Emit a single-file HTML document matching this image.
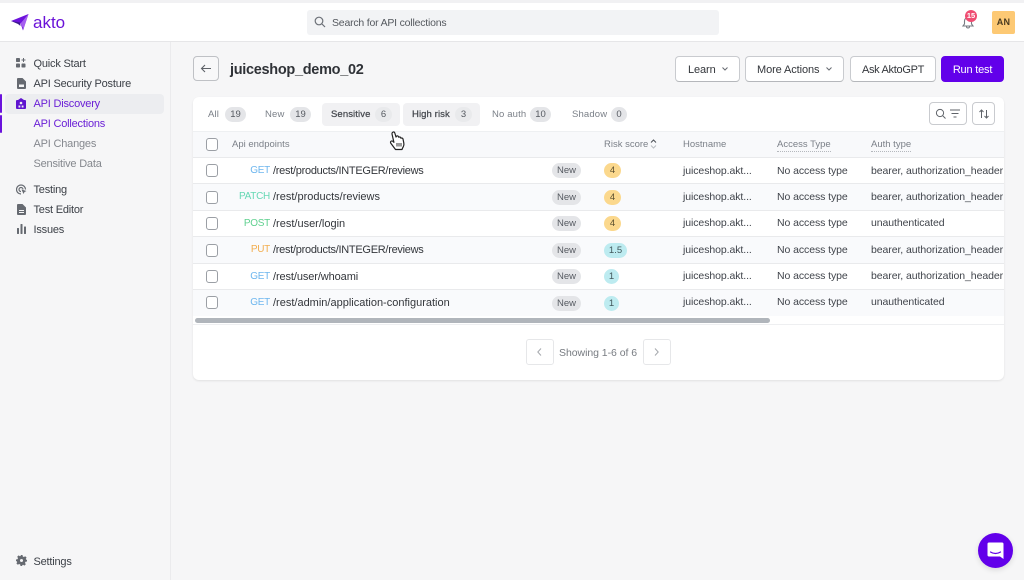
<!DOCTYPE html>
<html lang="en"><head><meta charset="utf-8"><title>Akto</title>
<style>
*{box-sizing:border-box}
html,body{margin:0;padding:0;width:1024px;height:580px;overflow:hidden;background:#f6f6f7}
body{font-family:"Liberation Sans",sans-serif;color:#303338;position:relative;filter:blur(.3px)}
.t{position:absolute;white-space:nowrap;line-height:14px;font-size:11px;letter-spacing:.25px}
.b{position:absolute}
.nav{color:#3c4047;font-size:11px;letter-spacing:-.2px}
.hd{color:#7b8088;font-size:9.5px;letter-spacing:.15px}
.th{color:#7b8088;font-size:9.5px;letter-spacing:0}
.cell{color:#40444b;font-size:10.5px;letter-spacing:-.08px}
.path{color:#33363b;font-size:11px;letter-spacing:0}
.m{font-size:10px;letter-spacing:-.28px;right:754px}
.pill{position:absolute;border-radius:9px;text-align:center;font-size:9.5px;line-height:15px;height:15px;color:#565a61;background:#e4e5e8}
.row{position:absolute;left:193px;width:811px;border-bottom:1px solid #e9eaec}
.cb{position:absolute;left:206px;width:12px;height:13px;border:1px solid #9b9fa5;border-radius:3px;background:#fff}
.btn{position:absolute;top:56px;height:26px;background:#fff;border:1px solid #c9cbcf;border-bottom-color:#b5b7bb;border-radius:4px;font-size:11px;letter-spacing:-.1px;line-height:26px;text-align:center;color:#33363b}
.tab{position:absolute;top:103px;height:23px;border-radius:4px}
.st{font-size:9.5px;color:#45484e;letter-spacing:.1px;-webkit-text-stroke:.25px #45484e}
</style></head><body>

<div class="b" style="left:0;top:0;width:1024px;height:3px;background:#f1f1f3"></div>
<div class="b" style="left:0;top:3px;width:1024px;height:39px;background:#fff;border-bottom:1px solid #e6e6e8"></div>
<div class="b" style="left:170px;top:42px;width:1px;height:538px;background:#ebebed"></div>

<svg class="b" style="left:10px;top:13px" width="20" height="19" viewBox="0 0 20 19"><path d="M1 8 L18.500 1 L13 17.500 L10.500 10.500 Z" fill="#6d12dc"/><path d="M1 8 L10 9.500 L10.500 13 L8 11 Z" fill="#3c1a8e"/><path d="M10.500 10.500 L18.500 1 L13.500 16 Z" fill="#a65ff0"/></svg>
<div class="t" style="left:33px;top:13px;font-size:17px;line-height:20px;color:#6a12d8;letter-spacing:0">akto</div>

<div class="b" style="left:307px;top:10px;width:412px;height:25px;background:#f2f3f5;border-radius:3px"></div>
<svg class="b" style="left:314px;top:16px" width="12" height="12" viewBox="0 0 12 12" fill="none" stroke="#6c7077" stroke-width="1.200"><circle cx="5" cy="5" r="3.800"/><path d="M8 8l3 3"/></svg>
<div class="t" style="left:332px;top:15.500px;font-size:10.500px;color:#55595f;letter-spacing:-.2px">Search for API collections</div>

<svg class="b" style="left:961px;top:15px" width="14" height="14" viewBox="0 0 14 14" fill="none" stroke="#777b82" stroke-width="1.100"><path d="M2 11h10l-1.500-2V6a3.500 3.500 0 0 0-7 0v3z"/><path d="M5.500 11.500a1.500 1.500 0 0 0 3 0"/></svg>
<div class="b" style="left:965px;top:10px;width:12px;height:12px;border-radius:50%;background:#ef4d72;color:#fff;font-size:7.500px;font-weight:bold;line-height:12px;text-align:center">15</div>
<div class="b" style="left:992px;top:11px;width:23px;height:23px;border-radius:2px;background:#fdc974;color:#4a3a20;font-size:9px;font-weight:bold;line-height:23px;text-align:center;letter-spacing:.3px">AN</div>

<!-- Sidebar -->
<div class="b" style="left:5px;top:94px;width:159px;height:20px;background:#ecedf0;border-radius:4px"></div>
<div class="b" style="left:0;top:94px;width:2px;height:19px;background:#6a12dc;border-radius:1px"></div>
<div class="b" style="left:0;top:115px;width:2px;height:18px;background:#6a12dc;border-radius:1px"></div>

<svg class="b" style="left:16px;top:58px" width="10" height="10" viewBox="0 0 10 10" fill="#666a71"><rect x="0" y="0" width="4" height="4" rx=".8"/><rect x="0" y="5.500" width="4" height="4" rx=".8"/><rect x="5.500" y="5.500" width="4" height="4" rx=".8"/><path d="M7 0h1v1.500h1.500v1H8V4H7V2.500H5.500v-1H7z"/></svg>
<svg class="b" style="left:17px;top:78px" width="9" height="11" viewBox="0 0 9 11" fill="#666a71"><path d="M1 0h4.500L9 3.500V10a1 1 0 0 1-1 1H1a1 1 0 0 1-1-1V1a1 1 0 0 1 1-1z"/><rect x="2" y="6.500" width="5" height="2.500" fill="#f6f6f7"/></svg>
<svg class="b" style="left:16px;top:98px" width="10" height="11" viewBox="0 0 10 11" fill="#5f14d0"><path d="M5 0l3 2h1a1 1 0 0 1 1 1v7a1 1 0 0 1-1 1H1a1 1 0 0 1-1-1V3a1 1 0 0 1 1-1h1z"/><circle cx="5" cy="5" r="1.300" fill="#ecedf0"/><rect x="2.500" y="7.500" width="1.800" height="2" fill="#ecedf0"/><rect x="5.700" y="7.500" width="1.800" height="2" fill="#ecedf0"/></svg>
<svg class="b" style="left:16px;top:184px" width="11" height="11" viewBox="0 0 11 11" fill="none" stroke="#666a71" stroke-width="1.200"><path d="M5 10a4.500 4.500 0 1 1 4.500-4.500"/><path d="M5 7.500a2 2 0 1 1 2-2"/><path d="M5.500 5.500l5 1.500-2 1-1 2z" fill="#666a71" stroke="none"/></svg>
<svg class="b" style="left:17px;top:204px" width="9" height="11" viewBox="0 0 9 11" fill="#666a71"><path d="M1 0h4.500L9 3.500V10a1 1 0 0 1-1 1H1a1 1 0 0 1-1-1V1a1 1 0 0 1 1-1z"/><rect x="2" y="6" width="5" height="1" fill="#f6f6f7"/><rect x="2" y="8" width="5" height="1" fill="#f6f6f7"/></svg>
<svg class="b" style="left:17px;top:224px" width="9" height="10" viewBox="0 0 9 10" fill="#666a71"><rect x="0" y="4" width="2" height="6" rx=".5"/><rect x="3.500" y="0" width="2" height="10" rx=".5"/><rect x="7" y="2.500" width="2" height="7.500" rx=".5"/></svg>
<svg class="b" style="left:16px;top:555px" width="11" height="11" viewBox="0 0 11 11"><path d="M4.500 0h2l.3 1.500 1.100.5L9.200 1.200l1.400 1.400-.8 1.300.5 1.100L11 4.500v2l-1.500.3-.5 1.100.8 1.300-1.400 1.400-1.300-.8-1.100.5L6.500 11h-2l-.3-1.500-1.100-.5-1.300.8L.4 8.400l.8-1.300-.5-1.100L0 6.500v-2l1.500-.3.500-1.100-.8-1.300L2.600.4l1.300.8 1.100-.5z" fill="#666a71"/><circle cx="5.500" cy="5.500" r="1.500" fill="#f6f6f7"/></svg>

<div class="t nav" style="left:33.500px;top:57px">Quick Start</div>
<div class="t nav" style="left:33.500px;top:77px">API Security Posture</div>
<div class="t nav" style="left:33.500px;top:97px;color:#6a1fd6">API Discovery</div>
<div class="t nav" style="left:33.500px;top:117px;color:#6a1fd6">API Collections</div>
<div class="t nav" style="left:33.500px;top:137px;color:#85888e">API Changes</div>
<div class="t nav" style="left:33.500px;top:157px;color:#85888e">Sensitive Data</div>
<div class="t nav" style="left:33.500px;top:183px">Testing</div>
<div class="t nav" style="left:33.500px;top:203px">Test Editor</div>
<div class="t nav" style="left:33.500px;top:223px">Issues</div>
<div class="t nav" style="left:33.500px;top:555px">Settings</div>

<!-- Header -->
<div class="b" style="left:193px;top:56px;width:26px;height:25px;background:#f8f8f9;border:1px solid #bfc1c5;border-radius:4px"></div>
<svg class="b" style="left:200px;top:63px" width="12" height="11" viewBox="0 0 12 11" fill="none" stroke="#5f6369" stroke-width="1.100"><path d="M11 5.500H1.500M5 2L1.500 5.500 5 9"/></svg>
<div class="t" style="left:230px;top:60px;font-size:14.500px;line-height:20px;font-weight:bold;color:#2f3237;letter-spacing:-.3px">juiceshop_demo_02</div>

<div class="btn" style="left:675px;width:65px;text-align:left;padding-left:12px">Learn</div>
<svg class="b" style="left:721px;top:66px" width="8" height="6" viewBox="0 0 8 6" fill="none" stroke="#666a71" stroke-width="1"><path d="M1.500 1.500L4 4l2.500-2.500"/></svg>
<div class="btn" style="left:745px;width:99px;text-align:left;padding-left:11px">More Actions</div>
<svg class="b" style="left:825px;top:66px" width="8" height="6" viewBox="0 0 8 6" fill="none" stroke="#666a71" stroke-width="1"><path d="M1.500 1.500L4 4l2.500-2.500"/></svg>
<div class="btn" style="left:850px;width:86px;letter-spacing:-.3px">Ask AktoGPT</div>
<div class="btn" style="left:941px;width:63px;background:#6200ea;border-color:#6200ea;color:#fff;letter-spacing:-.2px">Run test</div>

<!-- Card -->
<div class="b" style="left:193px;top:97px;width:811px;height:283px;background:#fff;border-radius:6px;box-shadow:0 1px 2px rgba(0,0,0,.09)"></div>

<div class="tab" style="left:322px;width:78px;background:#f1f1f3"></div>
<div class="tab" style="left:403px;width:77px;background:#f1f1f3"></div>

<div class="t hd" style="left:208px;top:108px">All</div>
<div class="pill" style="left:225px;top:107px;width:21px">19</div>
<div class="t hd" style="left:265px;top:108px">New</div>
<div class="pill" style="left:290px;top:107px;width:21px">19</div>
<div class="t st" style="left:331px;top:108px">Sensitive</div>
<div class="pill" style="left:375px;top:107px;width:17px;background:#e9eaec">6</div>
<div class="t st" style="left:412px;top:108px">High risk</div>
<div class="pill" style="left:455px;top:107px;width:17px;background:#e9eaec">3</div>
<div class="t hd" style="left:492px;top:108px">No auth</div>
<div class="pill" style="left:530px;top:107px;width:21px">10</div>
<div class="t hd" style="left:572px;top:108px">Shadow</div>
<div class="pill" style="left:611px;top:107px;width:16px">0</div>

<div class="b" style="left:929px;top:102px;width:38px;height:23px;border:1px solid #c9cbcf;border-radius:4px;background:#fff"></div>
<svg class="b" style="left:935px;top:108px" width="28" height="12" viewBox="0 0 28 12" fill="none" stroke="#5f6369" stroke-width="1"><circle cx="5" cy="5" r="3.600"/><path d="M7.800 7.800L10.500 10.500"/><path d="M15 2h10M16.500 5.500h7M18.500 9h3"/></svg>
<div class="b" style="left:972px;top:102px;width:23px;height:23px;border:1px solid #c9cbcf;border-radius:4px;background:#fff"></div>
<svg class="b" style="left:978px;top:108px" width="12" height="12" viewBox="0 0 12 12" fill="none" stroke="#5f6369" stroke-width="1"><path d="M3.500 10V2M1.500 4l2-2 2 2M8.500 2v8M6.500 8l2 2 2-2"/></svg>

<!-- Table header -->
<div class="b" style="left:193px;top:131px;width:811px;height:27px;background:#f8f9fb;border-top:1px solid #eef0f2;border-bottom:1px solid #e9eaec"></div>
<div class="cb" style="top:138px"></div>
<div class="t th" style="left:232px;top:138px">Api endpoints</div>
<div class="t th" style="left:604px;top:138px">Risk score</div>
<svg class="b" style="left:650px;top:139px" width="7" height="10" viewBox="0 0 7 10" fill="none" stroke-width="1"><path d="M1 3.500L3.500 1 6 3.500" stroke="#4c5056"/><path d="M1 6.500L3.500 9 6 6.500" stroke="#b9bcc1"/></svg>
<div class="t th" style="left:683px;top:138px">Hostname</div>
<div class="t th" style="left:777px;top:138px;border-bottom:1px dotted #b5b8bd;line-height:13px">Access Type</div>
<div class="t th" style="left:871px;top:138px;border-bottom:1px dotted #b5b8bd;line-height:13px">Auth type</div>

<!-- Rows -->
<div class="row" style="top:158px;height:26px;background:#fff"></div>
<div class="row" style="top:184px;height:27px;background:#f9fafc"></div>
<div class="row" style="top:211px;height:26px;background:#fff"></div>
<div class="row" style="top:237px;height:27px;background:#f9fafc"></div>
<div class="row" style="top:264px;height:26px;background:#fff"></div>
<div class="row" style="top:290px;height:26px;background:#f9fafc;border-bottom:0"></div>

<div class="cb" style="top:164px"></div><div class="cb" style="top:191px"></div><div class="cb" style="top:217px"></div><div class="cb" style="top:244px"></div><div class="cb" style="top:270px"></div><div class="cb" style="top:296px"></div>

<div class="t m" style="top:164px;color:#6db6ee">GET</div>
<div class="t path" style="left:273px;top:164px;letter-spacing:-.28px">/rest/products/INTEGER/reviews</div>
<div class="t m" style="top:190px;color:#66d8b4">PATCH</div>
<div class="t path" style="left:273px;top:190px">/rest/products/reviews</div>
<div class="t m" style="top:217px;color:#5fd08f">POST</div>
<div class="t path" style="left:273px;top:217px">/rest/user/login</div>
<div class="t m" style="top:243px;color:#f2ae4f">PUT</div>
<div class="t path" style="left:273px;top:243px;letter-spacing:-.28px">/rest/products/INTEGER/reviews</div>
<div class="t m" style="top:270px;color:#6db6ee">GET</div>
<div class="t path" style="left:273px;top:270px;letter-spacing:-.1px">/rest/user/whoami</div>
<div class="t m" style="top:296px;color:#6db6ee">GET</div>
<div class="t path" style="left:273px;top:296px">/rest/admin/application-configuration</div>

<div class="pill" style="left:552px;top:163px;width:29px">New</div>
<div class="pill" style="left:552px;top:190px;width:29px">New</div>
<div class="pill" style="left:552px;top:216px;width:29px">New</div>
<div class="pill" style="left:552px;top:243px;width:29px">New</div>
<div class="pill" style="left:552px;top:269px;width:29px">New</div>
<div class="pill" style="left:552px;top:296px;width:29px">New</div>

<div class="pill" style="left:604px;top:163px;width:17px;background:#fbd88d;color:#5c5030">4</div>
<div class="pill" style="left:604px;top:190px;width:17px;background:#fbd88d;color:#5c5030">4</div>
<div class="pill" style="left:604px;top:216px;width:17px;background:#fbd88d;color:#5c5030">4</div>
<div class="pill" style="left:604px;top:243px;width:23px;background:#bdebf0;color:#42585c">1.5</div>
<div class="pill" style="left:604px;top:269px;width:15px;background:#bdebf0;color:#42585c">1</div>
<div class="pill" style="left:604px;top:296px;width:15px;background:#bdebf0;color:#42585c">1</div>

<div class="t cell" style="left:683px;top:164px">juiceshop.akt...</div>
<div class="t cell" style="left:683px;top:190px">juiceshop.akt...</div>
<div class="t cell" style="left:683px;top:216px">juiceshop.akt...</div>
<div class="t cell" style="left:683px;top:243px">juiceshop.akt...</div>
<div class="t cell" style="left:683px;top:269px">juiceshop.akt...</div>
<div class="t cell" style="left:683px;top:295px">juiceshop.akt...</div>

<div class="t cell" style="left:777px;top:164px">No access type</div>
<div class="t cell" style="left:777px;top:190px">No access type</div>
<div class="t cell" style="left:777px;top:216px">No access type</div>
<div class="t cell" style="left:777px;top:243px">No access type</div>
<div class="t cell" style="left:777px;top:269px">No access type</div>
<div class="t cell" style="left:777px;top:295px">No access type</div>

<div class="b" style="left:871px;top:150px;width:133px;height:166px;overflow:hidden">
<div class="t cell" style="left:0;top:14px">bearer, authorization_header</div>
<div class="t cell" style="left:0;top:40px">bearer, authorization_header</div>
<div class="t cell" style="left:0;top:66px">unauthenticated</div>
<div class="t cell" style="left:0;top:93px">bearer, authorization_header</div>
<div class="t cell" style="left:0;top:119px">bearer, authorization_header</div>
<div class="t cell" style="left:0;top:145px">unauthenticated</div>
</div>

<!-- Scrollbar -->
<div class="b" style="left:195px;top:318px;width:575px;height:5px;background:#b0b5bb;border-radius:3px"></div>
<div class="b" style="left:193px;top:324px;width:811px;height:1px;background:#eeeff1"></div>

<!-- Pagination -->
<div class="b" style="left:526px;top:339px;width:28px;height:26px;border:1px solid #e6e7e9;border-radius:3px;background:#fff"></div>
<svg class="b" style="left:536px;top:347px" width="7" height="10" viewBox="0 0 7 10" fill="none" stroke="#a5a8ad" stroke-width="1"><path d="M5 1.500L1.800 5 5 8.500"/></svg>
<div class="t" style="left:559px;top:346px;font-size:10.500px;color:#777b81;letter-spacing:-.05px">Showing 1-6 of 6</div>
<div class="b" style="left:643px;top:339px;width:28px;height:26px;border:1px solid #e6e7e9;border-radius:3px;background:#fff"></div>
<svg class="b" style="left:653px;top:347px" width="7" height="10" viewBox="0 0 7 10" fill="none" stroke="#a5a8ad" stroke-width="1"><path d="M2 1.500L5.200 5 2 8.500"/></svg>

<!-- Cursor -->
<svg class="b" style="left:388px;top:130px" width="19" height="22" viewBox="0 0 19 22"><path d="M4.500 2.500c1-1 2-.5 2.300.5l1.200 4 .5-.8c.8-.6 1.700-.2 2 .4l.3.6c.7-.5 1.600-.2 1.900.5l.2.5c.8-.5 1.800-.1 2.100.8l.8 4c.3 1.800-.2 3.500-1.200 5l-.6 1.500H7.500L3 13.500c-.8-1-.6-2 .2-2.400.7-.4 1.500 0 2.200.7l.5.5L4 4c-.1-.6 0-1.100.5-1.500z" fill="#fff" stroke="#222" stroke-width="1.200" stroke-linejoin="round"/><path d="M9 13v3.500M11 13v3.500M13 13v3.500" stroke="#333" stroke-width="1"/></svg>

<!-- Chat -->
<div class="b" style="left:978px;top:533px;width:35px;height:35px;border-radius:50%;background:#6200ea;box-shadow:0 2px 6px rgba(0,0,0,.12)"></div>
<svg class="b" style="left:987px;top:542px" width="17" height="18" viewBox="0 0 17 18"><path d="M2 .5h13a1.500 1.500 0 0 1 1.500 1.500v15l-3.500-2.500H2A1.500 1.500 0 0 1 .5 13V2A1.500 1.500 0 0 1 2 .5z" fill="#fff"/><path d="M3.500 10c3 2 7 2 10 0" fill="none" stroke="#6200ea" stroke-width="1.200" stroke-linecap="round"/></svg>

</body></html>
